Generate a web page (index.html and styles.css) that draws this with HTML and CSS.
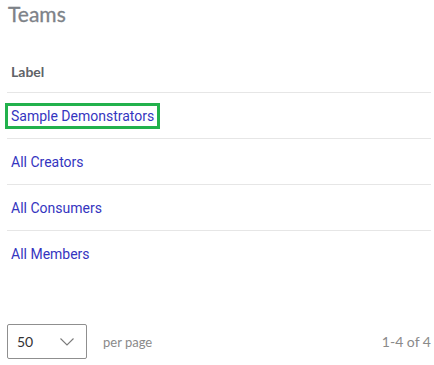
FILE: index.html
```html
<!DOCTYPE html>
<html lang="en">
<head>
    <meta charset="UTF-8">
    <meta name="viewport" content="width=device-width, initial-scale=1.0">
    <title>Teams</title>
    <link rel="stylesheet" href="styles.css">
</head>
<body>
    <div class="teams">
        <h2 class="title">Teams</h2>

        <table class="team-table">
            <thead>
                <tr><th>Label</th></tr>
            </thead>
            <tbody>
                <tr><td><a href="#" class="team-link selected">Sample Demonstrators</a></td></tr>
                <tr><td><a href="#" class="team-link">All Creators</a></td></tr>
                <tr><td><a href="#" class="team-link">All Consumers</a></td></tr>
                <tr><td><a href="#" class="team-link">All Members</a></td></tr>
            </tbody>
        </table>

        <div class="pager">
            <div class="page-size">
                <div class="select">
                    <span class="select-value">50</span>
                    <svg class="chevron" width="14" height="8" viewBox="0 0 14 8">
                        <path d="M0.5 0.5 L7 7 L13.5 0.5" fill="none" stroke="#7a7a7a" stroke-width="1.1"/>
                    </svg>
                </div>
                <span class="per-page">per page</span>
            </div>
            <span class="range">1-4 of 4</span>
        </div>
    </div>
</body>
</html>
```

FILE: styles.css
```css
body {
    margin: 0;
    background-color: #fff;
    font-family: Roboto, "Liberation Sans", sans-serif;
}
.teams {
    padding: 0 3px 0 7px;
}
.title {
    margin: 0;
    padding: 0 0 0 1px;
    font-family: Lato, "Liberation Sans", sans-serif;
    font-size: 21px;
    font-weight: 400;
    line-height: 27px;
    color: #7d8288;
    -webkit-text-stroke: 0.3px #7d8288;
}
.team-table {
    width: 100%;
    border-collapse: collapse;
    margin-top: 33px;
}
.team-table th {
    text-align: left;
    font-family: Lato, "Liberation Sans", sans-serif;
    font-size: 14px;
    font-weight: 700;
    color: #5f6368;
    padding: 3px 4px 0 4px;
    height: 29px;
    vertical-align: top;
    border-bottom: 1px solid #e6e6e6;
}
.team-table td {
    height: 45px;
    padding: 0 4px;
    border-bottom: 1px solid #e6e6e6;
    vertical-align: middle;
}
.team-table tr:last-child td {
    border-bottom: none;
}
.team-link {
    font-size: 14px;
    color: #3535c0;
    text-decoration: none;
}
.selected {
    display: inline-block;
    line-height: 16px;
    padding: 2px 3px;
    margin: -2px -3px;
    box-shadow: 0 0 0 3px #22b14c;
}
.pager {
    display: flex;
    align-items: center;
    justify-content: space-between;
    margin-top: 48px;
    font-family: Lato, "Liberation Sans", sans-serif;
}
.page-size {
    display: flex;
    align-items: center;
}
.select {
    width: 80px;
    height: 35px;
    border: 1px solid #8f8f8f;
    border-radius: 2px;
    display: flex;
    align-items: center;
    justify-content: space-between;
    padding: 0 12px 0 9px;
    box-sizing: border-box;
}
.select-value {
    font-size: 14px;
    color: #333;
}
.chevron {
    display: block;
}
.per-page {
    margin-left: 16px;
    font-size: 13px;
    color: #8a8a8a;
}
.range {
    font-size: 14px;
    color: #8a8a8a;
}
```
